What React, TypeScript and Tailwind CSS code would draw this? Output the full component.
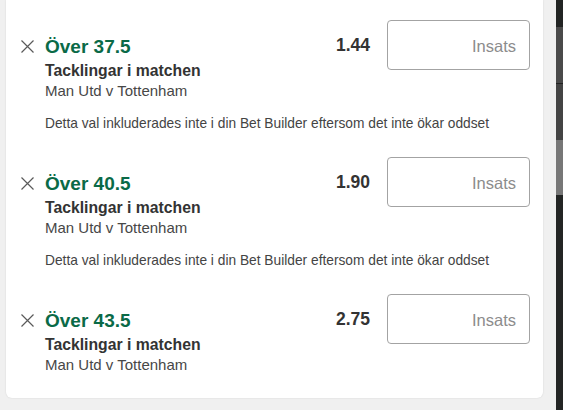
const bets = [
  { line: "Över 37.5", odds: "1.44", note: true },
  { line: "Över 40.5", odds: "1.90", note: true },
  { line: "Över 43.5", odds: "2.75", note: false },
];

const CloseIcon = () => (
  <svg viewBox="0 0 15 15" className="w-[15px] h-[15px] ml-[14px] mr-[10px] shrink-0">
    <path d="M1.5 1.5 L13.5 13.5 M13.5 1.5 L1.5 13.5" stroke="#5a5a5a" strokeWidth="1.2" fill="none" />
  </svg>
);

const BetRow = ({ line, odds, note, last }: { line: string; odds: string; note: boolean; last: boolean }) => (
  <div className={`flex pt-5 ${last ? "pb-[23px]" : "pb-1"}`}>
    <div className="flex-1 min-w-0 pt-[13px]">
      <div className="flex items-center h-[26px]">
        <CloseIcon />
        <span className="text-[19px] font-bold text-[#0a6a47] leading-none">{line}</span>
      </div>
      <div className="pl-[39px] pt-[2px]">
        <p className="text-[15.75px] font-bold text-[#333] leading-5">Tacklingar i matchen</p>
        <p className="text-[15px] text-[#474747] leading-5">Man Utd v Tottenham</p>
        {note && (
          <p className="mt-[14px] text-[13.75px] text-[#444] leading-[18px] whitespace-nowrap">
            Detta val inkluderades inte i din Bet Builder eftersom det inte ökar oddset
          </p>
        )}
      </div>
    </div>
    <div className="flex items-center h-[50px] pr-[13px] shrink-0">
      <span className="text-[17.5px] font-bold text-[#333] mr-[17px]">{odds}</span>
      <div className="w-[143px] h-[50px] border border-[#a3a3a3] rounded-[4px] flex items-center justify-end pr-[13px] pt-[2px]">
        <span className="text-[16.5px] text-[#8c8c8c]">Insats</span>
      </div>
    </div>
  </div>
);

export default function App() {
  return (
    <div className="flex h-[410px] w-[563px] overflow-hidden bg-[#f0f0f0] font-['Liberation_Sans',Arial,sans-serif]">
      <div className="w-[556px] min-w-0 shrink-0">
        <div className="ml-[6px] mr-[13px] bg-white rounded-b-[6px] shadow-[0_0_2px_rgba(0,0,0,0.12)]">
          {bets.map((b, i) => (
            <BetRow key={i} {...b} last={i === bets.length - 1} />
          ))}
        </div>
      </div>
      <div className="w-[7px] flex flex-col">
        <div className="h-[27px] bg-[#222423]" />
        <div className="h-[56px] bg-[#4a4a4a]" />
        <div className="h-[57px] bg-[#444] border-t border-[#222]" />
        <div className="h-[55px] bg-[#777]" />
        <div className="flex-1 bg-[#232524]" />
      </div>
    </div>
  );
}
